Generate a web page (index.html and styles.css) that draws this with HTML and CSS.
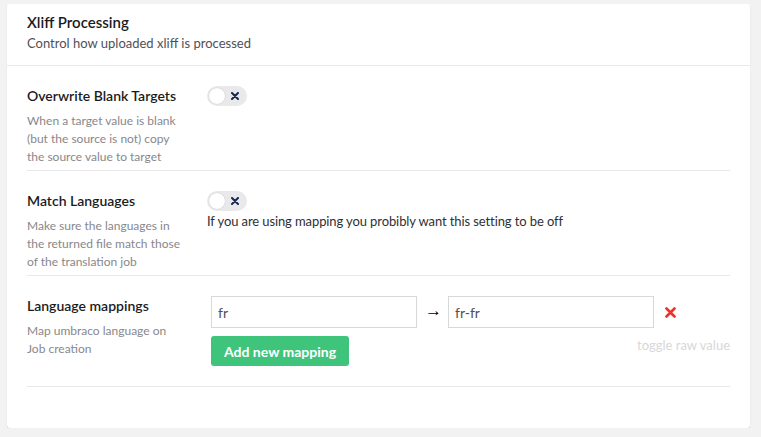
FILE: index.html
```html
<!DOCTYPE html>
<html>
<head>
<meta charset="utf-8">
<link rel="stylesheet" href="styles.css">
</head>
<body>
<div class="card">
  <div class="card-header">
    <div class="card-title">Xliff Processing</div>
    <div class="card-subtitle">Control how uploaded xliff is processed</div>
  </div>
  <div class="card-body">
    <div class="prop">
      <div class="prop-label">
        <div class="label-title">Overwrite Blank Targets</div>
        <div class="label-desc">When a target value is blank (but the source is not) copy the source value to target</div>
      </div>
      <div class="prop-control">
        <span class="toggle">
          <span class="knob"></span>
          <svg class="toggle-x" width="8" height="8" viewBox="0 0 8 8"><path d="M1 1L7 7M7 1L1 7" stroke="#1b264f" stroke-width="2" stroke-linecap="round"/></svg>
        </span>
      </div>
    </div>
    <div class="prop">
      <div class="prop-label">
        <div class="label-title">Match Languages</div>
        <div class="label-desc">Make sure the languages in the returned file match those of the translation job</div>
      </div>
      <div class="prop-control">
        <span class="toggle">
          <span class="knob"></span>
          <svg class="toggle-x" width="8" height="8" viewBox="0 0 8 8"><path d="M1 1L7 7M7 1L1 7" stroke="#1b264f" stroke-width="2" stroke-linecap="round"/></svg>
        </span>
        <div class="control-note">If you are using mapping you probibly want this setting to be off</div>
      </div>
    </div>
    <div class="prop prop-last">
      <div class="prop-label">
        <div class="label-title">Language mappings</div>
        <div class="label-desc">Map umbraco language on Job creation</div>
      </div>
      <div class="prop-control mapping">
        <div class="map-row">
          <input class="map-input" type="text" value="fr">
          <span class="map-arrow">→</span>
          <input class="map-input" type="text" value="fr-fr">
          <svg class="map-remove" width="11" height="11" viewBox="0 0 11 11"><path d="M1.5 1.5L9.5 9.5M9.5 1.5L1.5 9.5" stroke="#f0302b" stroke-width="2.6" stroke-linecap="round"/></svg>
        </div>
        <div class="map-actions">
          <button class="btn-add" type="button">Add new mapping</button>
          <span class="raw-link">toggle raw value</span>
        </div>
      </div>
    </div>
  </div>
</div>
</body>
</html>
```

FILE: styles.css
```css
html, body {
  margin: 0;
  padding: 0;
}
body {
  background: #f3f2f2;
  font-family: Lato, "Open Sans", sans-serif;
  color: #1e1e1e;
}
.card {
  margin: 4px 11px 0 7px;
  height: 424px;
  background: #fff;
  border-radius: 3px;
  box-shadow: 0 1px 1px rgba(0, 0, 0, 0.18);
  box-sizing: border-box;
}
.card-header {
  padding: 8px 20px 11px;
  border-bottom: 1px solid #e9e9eb;
}
.card-title {
  font-size: 15px;
  font-weight: 600;
  line-height: 21px;
  color: #1b1b1d;
}
.card-subtitle {
  font-size: 13px;
  line-height: 21px;
  color: #515054;
}
.card-body {
  padding: 0 20px;
}
.prop {
  display: flex;
  gap: 20px;
  padding: 19px 0 4px;
  border-bottom: 1px solid #e9e9eb;
}
.prop-last {
  padding-bottom: 20px;
}
.prop-label {
  width: 160px;
  flex: none;
}
.label-title {
  font-size: 14px;
  font-weight: 600;
  line-height: 21px;
  color: #1b1b1d;
}
.label-desc {
  margin-top: 6px;
  font-size: 12px;
  line-height: 18px;
  color: #88878b;
}
.prop-control {
  flex: 1;
  padding-top: 1px;
}
.toggle {
  position: relative;
  display: block;
  width: 40px;
  height: 20px;
  border-radius: 10px;
  background: #e9e9eb;
}
.knob {
  position: absolute;
  left: 2px;
  top: 2px;
  width: 16px;
  height: 16px;
  border-radius: 50%;
  background: #fff;
  box-shadow: 0 0 1px rgba(0, 0, 0, 0.25);
}
.toggle-x {
  position: absolute;
  left: 24px;
  top: 6px;
}
.control-note {
  font-size: 13px;
  line-height: 20px;
  color: #303033;
  letter-spacing: -0.1px;
}
.mapping {
  padding-left: 4px;
}
.map-row {
  display: flex;
  align-items: center;
  gap: 8px;
}
.map-input {
  width: 206px;
  height: 32px;
  box-sizing: border-box;
  border: 1px solid #d8d7d9;
  border-radius: 0;
  padding: 0 6px;
  font-family: Lato, sans-serif;
  font-size: 14px;
  color: #515054;
  margin: 0;
  outline: none;
}
.map-arrow {
  width: 15px;
  font-family: "Liberation Serif", serif;
  font-size: 17px;
  line-height: 20px;
  color: #000;
  text-align: center;
  margin-top: -2px;
}
.map-remove {
  margin-left: 3px;
}
.map-actions {
  display: flex;
  margin-top: 8px;
}
.btn-add {
  height: 30px;
  padding: 0 13px;
  border: none;
  border-radius: 3px;
  background: #3fc47c;
  color: #fff;
  font-family: Lato, sans-serif;
  font-size: 14px;
  font-weight: 700;
}
.raw-link {
  margin-left: auto;
  font-size: 13px;
  line-height: 18px;
  color: #d8d7d9;
}
```
